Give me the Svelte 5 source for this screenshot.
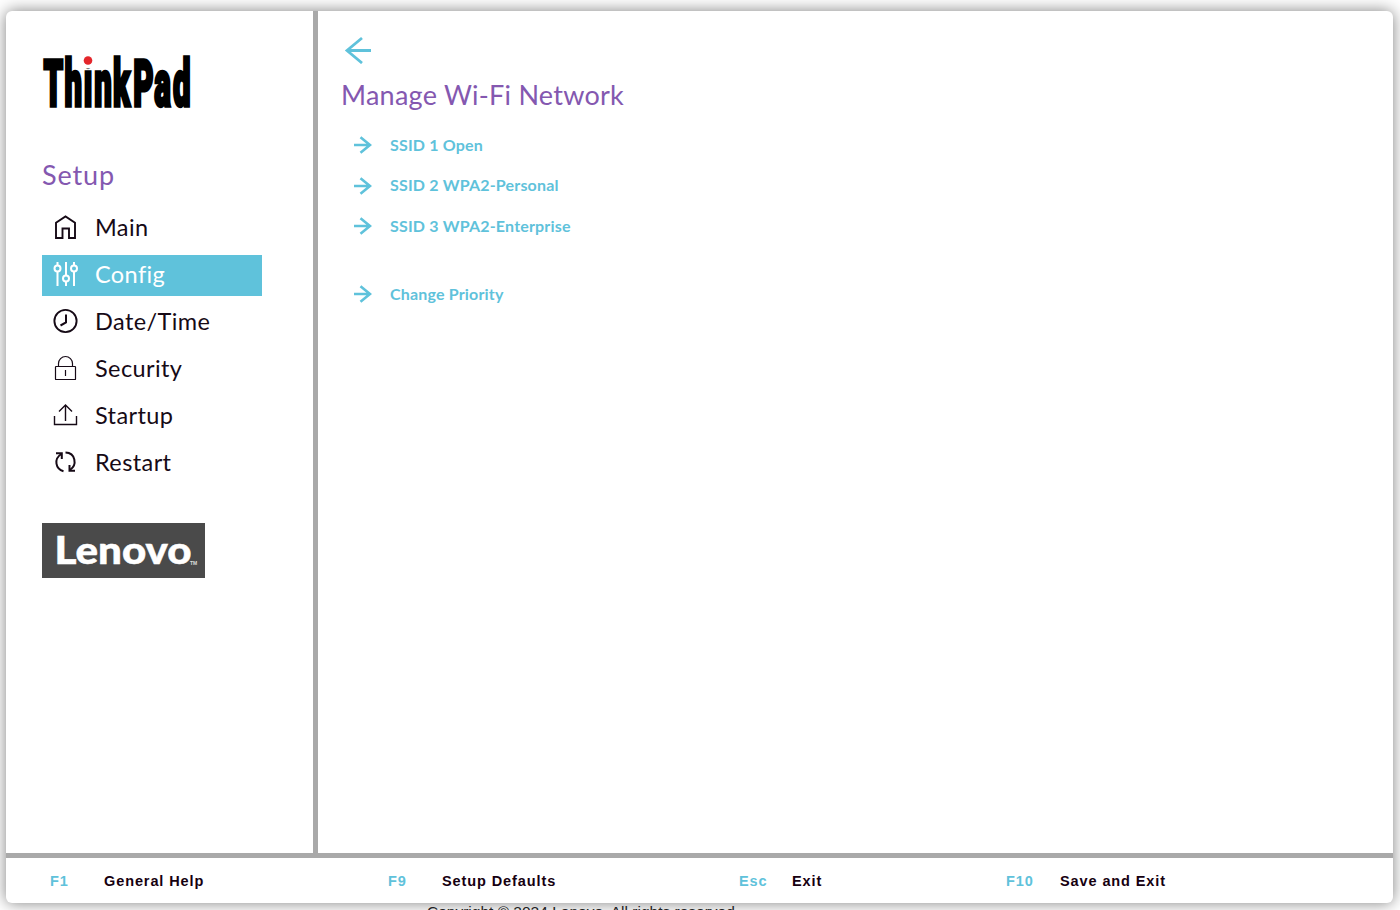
<script>
  const menu = [
    { id: 'main', label: 'Main' },
    { id: 'config', label: 'Config', active: true },
    { id: 'date', label: 'Date/Time' },
    { id: 'security', label: 'Security' },
    { id: 'startup', label: 'Startup' },
    { id: 'restart', label: 'Restart' }
  ];
  const links = ['SSID 1 Open', 'SSID 2 WPA2-Personal', 'SSID 3 WPA2-Enterprise', 'Change Priority'];
  const keys = [
    { key: 'F1', label: 'General Help' },
    { key: 'F9', label: 'Setup Defaults' },
    { key: 'Esc', label: 'Exit' },
    { key: 'F10', label: 'Save and Exit' }
  ];
</script>

{#snippet icon(id)}
  <svg class="icon" viewBox="0 0 26 26" fill="none" stroke="currentColor">
    {#if id === 'main'}
      <path stroke-width="1.900" d="M3 24V8.800L12.500 2.500 22 8.800V24h-6V14.500h-6.500V24Z" />
    {:else if id === 'config'}
      <g stroke-width="2">
        <path d="M4.500 1v3.500M4.500 10.500V25M13 1v13.500M13 20.500V25M21 1v3.500M21 10.500V25" />
        <circle cx="4.500" cy="7.500" r="3" /><circle cx="13" cy="17.500" r="3" /><circle cx="21" cy="7.500" r="3" />
      </g>
    {:else if id === 'date'}
      <circle cx="12.500" cy="13" r="11.100" stroke-width="1.900" />
      <path stroke-width="2" d="M13 6.500V14.500L7.500 17.500" />
    {:else if id === 'security'}
      <g stroke-width="1.200">
        <rect x="2.500" y="11.500" width="20" height="13" rx=".6" />
        <path d="M5.500 11V8.500a7 7 0 0 1 14 0V11M12.500 15v6" />
      </g>
    {:else if id === 'startup'}
      <path stroke-width="1.400" d="M1.500 14v8.500h22V14M12.500 19V3M6 9.500L12.500 3l6.500 6.500" />
    {:else}
      <g stroke-width="2">
        <path d="M10.500 22.300C2.500 20 .5 10 8.300 5M12.500 3.600C22.500 4 24.500 16 17 21" />
        <path d="M3 4.300h5.800v5.800M22 21.700h-5.500v-5.800" />
      </g>
    {/if}
  </svg>
{/snippet}

<div class="page">
  <div class="card">
    <div class="body">
      <aside>
        <svg class="thinkpad" viewBox="0 0 150 56" role="img" aria-label="ThinkPad">
          <text transform="scale(.48 1)" y="52" x="3 47 87 109 148 190 234 273">ThinkPad</text>
          <rect x="41" y="0" width="9.800" height="14.500" fill="#fff" />
          <circle cx="46" cy="6.500" r="4.300" fill="#e4262b" />
        </svg>
        <h2>Setup</h2>
        <nav>
          {#each menu as item}
            <a class:active={item.active} class="item">{@render icon(item.id)}<span>{item.label}</span></a>
          {/each}
        </nav>
        <svg class="lenovo" viewBox="0 0 163 55">
          <text x="12.500" y="41" class="word" textLength="137" lengthAdjust="spacingAndGlyphs">Lenovo</text>
          <text x="148" y="42" class="tm">TM</text>
        </svg>
      </aside>
      <main>
        <svg class="back" viewBox="0 0 28 28"><path d="M27 14.500H3M18 2L3 14.500l15 12.500" /></svg>
        <h1>Manage Wi-Fi Network</h1>
        <div class="links">
          {#each links as link}
            <a class="link">
              <svg viewBox="0 0 18 18"><path d="M0 9h16M6.500 1.200L16 9l-9.500 7.800" /></svg>
              <span>{link}</span>
            </a>
          {/each}
        </div>
      </main>
    </div>
    <footer>
      {#each keys as k}
        <div class="key"><b>{k.key}</b><span>{k.label}</span></div>
      {/each}
    </footer>
  </div>
  <p class="copyright">Copyright © 2024 Lenovo. All rights reserved.</p>
</div>

<style>
  :global(body) { margin: 0; background: #fff; overflow: hidden; }
  .page { box-sizing: border-box; width: 1400px; height: 910px; padding: 11px 7px 0 6px; overflow: hidden; font-family: Lato, sans-serif; color: #160a16; }
  .card { height: 892px; border-radius: 6px; background: #fff; box-shadow: 0 0 16px rgba(0, 0, 0, .5); display: flex; flex-direction: column; overflow: hidden; }
  .body { height: 842px; display: flex; }
  aside { box-sizing: border-box; width: 312px; padding: 43px 0 0 36px; border-right: 5px solid #a9a9a9; }
  .thinkpad { display: block; width: 150px; height: 56px; overflow: visible; }
  .thinkpad text { font: 900 65px Roboto, sans-serif; fill: #000; stroke: #000; stroke-width: 3.600px; }
  h1, h2 { margin: 0; font-weight: 400; color: #8458b0; font-size: 27px; line-height: 34px; }
  h2 { margin-top: 48px; letter-spacing: .9px; }
  nav { margin-top: 16px; display: flex; flex-direction: column; gap: 6px; }
  .item { box-sizing: border-box; width: 220px; height: 41px; padding-left: 11px; display: flex; align-items: center; font-size: 23.500px; letter-spacing: .4px; }
  .item span { margin: -3px 0 0 16px; }
  .active { background: #5fc2db; color: #fff; }
  .icon { width: 26px; height: 26px; margin-top: -3px; }
  .lenovo { display: block; width: 163px; height: 55px; margin-top: 39px; background: #4a4a4a; }
  .word { font: 900 37.500px Lato, sans-serif; fill: #fff; stroke: #fff; stroke-width: .5px; }
  .tm { font: 700 5px "Liberation Sans", sans-serif; fill: #ddd; }
  main { padding: 25px 0 0 23px; }
  .back { display: block; width: 28px; height: 28px; margin-left: 3px; fill: none; stroke: #5fc2db; stroke-width: 2.800; }
  h1 { margin-top: 14px; letter-spacing: .25px; }
  .links { margin-top: 13px; display: flex; flex-direction: column; }
  .link { height: 40.500px; display: flex; align-items: center; color: #5fc2db; font-size: 16px; font-weight: 700; letter-spacing: .18px; }
  .link:last-child { margin-top: 27.500px; }
  .link span { margin-top: -2px; }
  .link svg { width: 18px; height: 18px; margin: 0 18px 0 13px; fill: none; stroke: currentColor; stroke-width: 2.600; }
  footer { height: 45px; border-top: 5px solid #a9a9a9; padding-left: 44px; display: grid; grid-template-columns: 338px 351px 267px 300px; align-items: center; font: 700 14.500px "Liberation Sans", sans-serif; letter-spacing: .9px; color: #160010; }
  .key { display: flex; }
  .key b { color: #5fc2db; width: 54px; }
  .key:nth-child(3) b { width: 53px; }
  .copyright { margin: 0 0 0 421px; font: 15.500px/17px "Liberation Sans", sans-serif; color: #222; position: relative; white-space: nowrap; }
</style>
